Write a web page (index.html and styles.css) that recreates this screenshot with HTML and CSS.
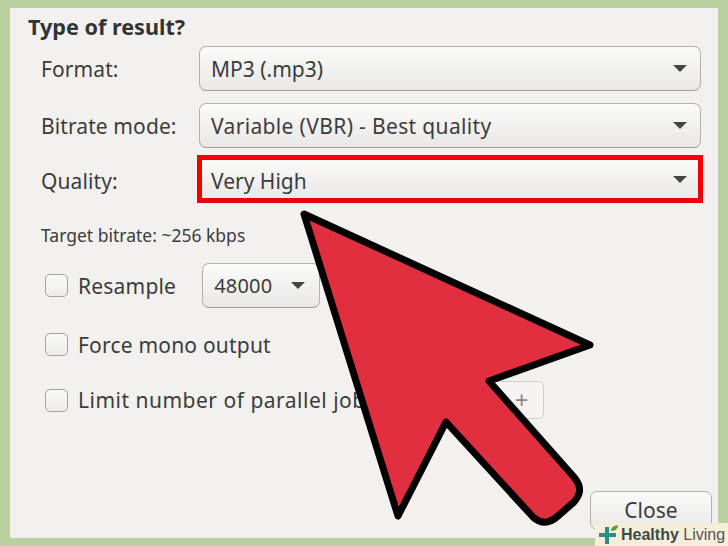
FILE: index.html
```html
<!DOCTYPE html>
<html lang="en">
<head>
<meta charset="utf-8">
<title>Type of result?</title>
<link rel="stylesheet" href="styles.css">
</head>
<body>
<main class="panel">
  <h1 class="title">Type of result?</h1>
  <div class="field-row">
    <span class="label">Format:</span>
    <div class="select wide"><span>MP3 (.mp3)</span><i class="caret"></i></div>
  </div>
  <div class="field-row">
    <span class="label">Bitrate mode:</span>
    <div class="select wide"><span class="stretched">Variable (VBR) - Best quality</span><i class="caret"></i></div>
  </div>
  <div class="field-row highlighted">
    <span class="label">Quality:</span>
    <div class="select wide marked"><span>Very High</span><i class="caret"></i></div>
  </div>
  <p class="hint">Target bitrate: ~256 kbps</p>
  <div class="check-row resample">
    <i class="check"></i><span class="check-label">Resample</span>
    <div class="select small"><span>48000</span><i class="caret"></i></div>
  </div>
  <div class="check-row mono">
    <i class="check"></i><span class="check-label">Force mono output</span>
  </div>
  <div class="check-row jobs">
    <i class="check"></i><span class="check-label">Limit number of parallel jobs:</span>
    <div class="spin"><span class="plus">+</span></div>
  </div>
  <div class="footer"><div class="close">Close</div></div>
</main>
<svg class="arrow" width="728" height="546" viewBox="0 0 728 546" aria-hidden="true">
  <path d="M304 214 L590 345 L489 381 L574 477 C582 487 581 494 574 502 L558 516 C549 524 541 524 533 517 L446 422 L398 516 Z" fill="#e03040" stroke="#000" stroke-width="7" stroke-linejoin="round"/>
</svg>
<div class="badge">
  <svg class="badge-icon" width="20" height="20" viewBox="0 0 20 20" aria-hidden="true">
    <path d="M6 2h4v6h7v4h-7v7H6v-7H0V8h6z" fill="#2d8b8a"/>
    <path d="M12 6 C12 2 15 1 19 0 C19 3 17 6 12 6z" fill="#5c9a3c"/>
  </svg>
  <span class="badge-text"><b>Healthy</b> Living</span>
</div>
</body>
</html>
```
FILE: styles.css
```css
html, body {
  margin: 0;
  padding: 0;
}
body {
  box-sizing: border-box;
  width: 728px;
  height: 546px;
  padding-top: 8px;
  overflow: hidden;
  position: relative;
  background: #b9d0a0;
  font-family: "Noto Sans", sans-serif;
  color: #3c3c3c;
}
.panel {
  box-sizing: border-box;
  margin-left: 10px;
  width: 708px;
  height: 530px;
  background: #f2f1ef;
  padding: 0 6px 8px 0;
  display: flex;
  flex-direction: column;
}
.title {
  margin: 6px 0 0 18px;
  height: 26px;
  line-height: 26px;
  font-size: 21.6px;
  font-weight: 700;
  color: #333;
}
.field-row {
  display: flex;
  align-items: center;
  margin: 12px 0 0 31px;
}
.title + .field-row {
  margin-top: 6px;
}
.field-row.highlighted {
  margin-top: 7px;
}
.label {
  width: 158px;
  flex: none;
  font-size: 21px;
  letter-spacing: 0.1px;
}
.highlighted .label {
  width: 156px;
  padding-top: 3px;
}
.select {
  box-sizing: border-box;
  display: flex;
  align-items: center;
  justify-content: space-between;
  height: 45px;
  border: 1px solid #b4b2ae;
  border-bottom-color: #a09e9a;
  border-radius: 7px;
  background: linear-gradient(#fbfbfa, #e9e8e6);
  font-size: 21px;
}
.stretched {
  letter-spacing: 0.35px;
}
.select.wide {
  width: 502px;
  padding: 0 13px 0 11px;
}
.select.marked {
  width: 506px;
  height: 48px;
  border: 5px solid #ee0005;
  border-radius: 0;
  padding: 3px 11px 0 9px;
}
.select.small {
  width: 118px;
  padding: 0 14px 0 11px;
  margin-left: 26px;
  font-size: 20px;
}
.caret {
  width: 0;
  height: 0;
  border-left: 7.5px solid transparent;
  border-right: 7.5px solid transparent;
  border-top: 7px solid #444;
}
.marked .caret {
  margin-top: -3px;
}
.hint {
  margin: 21px 0 0 31px;
  height: 22px;
  line-height: 22px;
  font-size: 17.5px;
}
.check-row {
  display: flex;
  align-items: center;
  margin-left: 35px;
  font-size: 21px;
  letter-spacing: 0.2px;
}
.resample {
  margin-top: 17px;
}
.mono {
  margin-top: 14px;
  height: 45px;
}
.jobs {
  margin: 14px 168px 0 35px;
  height: 38px;
  letter-spacing: 0.5px;
}
.check {
  box-sizing: border-box;
  flex: none;
  width: 23px;
  height: 23px;
  border: 1px solid #a5a39f;
  border-radius: 5px;
  background: linear-gradient(#f8f8f7, #eeedeb);
  margin-right: 10px;
}
.check-label {
  white-space: nowrap;
}
.spin {
  box-sizing: border-box;
  flex: none;
  display: flex;
  align-items: center;
  justify-content: flex-end;
  margin-left: auto;
  width: 155px;
  height: 38px;
  border: 1px solid #d0cfcc;
  border-radius: 6px;
  padding-right: 14px;
  background: #f5f4f3;
}
.plus {
  font-size: 24px;
  line-height: 1;
  color: #888;
}
.footer {
  margin-top: auto;
  display: flex;
  justify-content: flex-end;
}
.close {
  box-sizing: border-box;
  width: 122px;
  height: 39px;
  border: 1px solid #b4b2ae;
  border-radius: 7px;
  background: linear-gradient(#fbfbfa, #e9e8e6);
  font-size: 21px;
  line-height: 37px;
  text-align: center;
}
.arrow {
  position: absolute;
  left: 0;
  top: 0;
}
.badge {
  position: absolute;
  right: 0;
  bottom: 0;
  width: 133px;
  height: 23px;
  background: #f6eed8;
  display: flex;
  align-items: center;
  border-radius: 3px 0 0 0;
  font-family: "Liberation Sans", Arial, sans-serif;
}
.badge-icon {
  flex: none;
  margin: 0 2px 0 4px;
}
.badge-text {
  font-size: 16px;
  white-space: nowrap;
  color: #555;
}
.badge-text b {
  color: #3a4a48;
}
```
